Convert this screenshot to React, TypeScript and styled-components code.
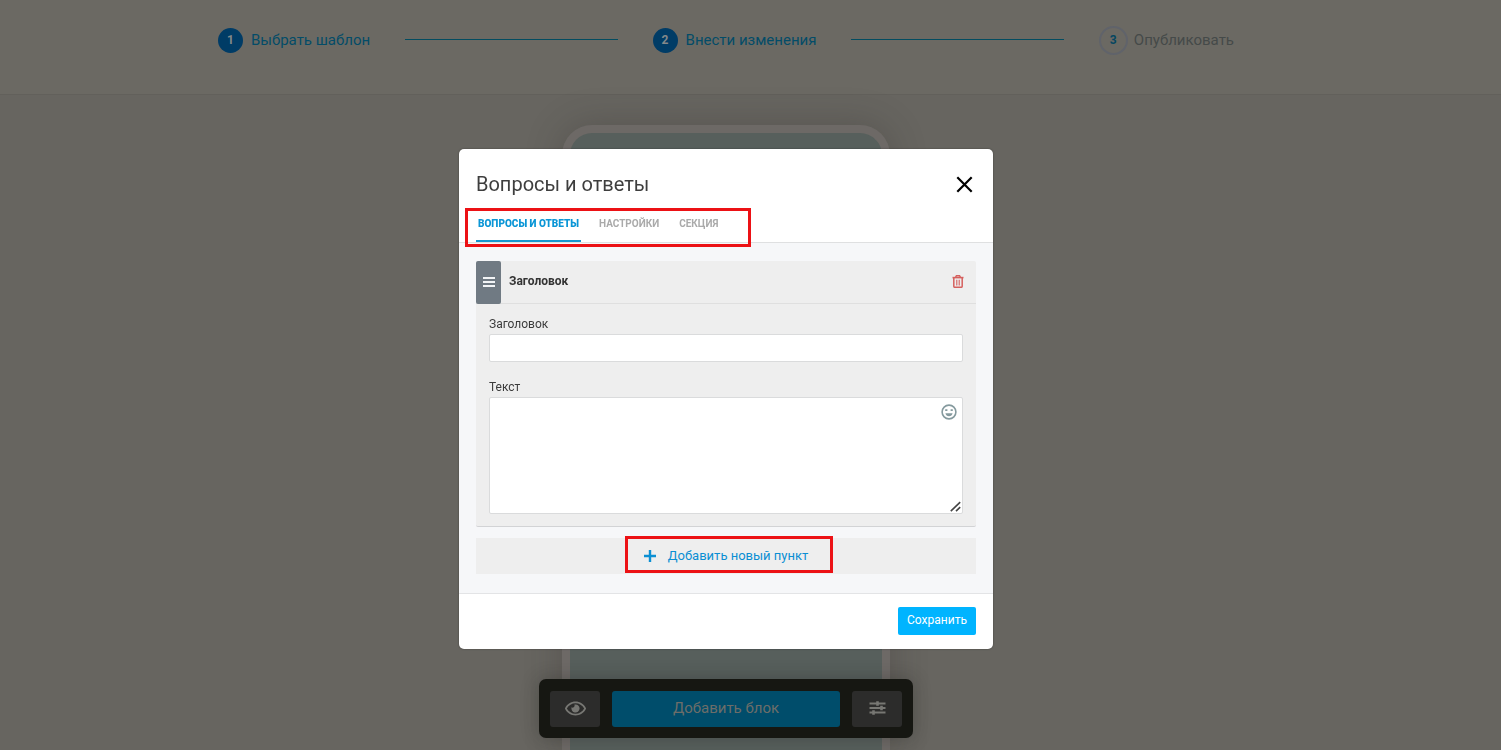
import React from "react";
import styled, { createGlobalStyle } from "styled-components";
import { FaRegEye } from "react-icons/fa";

const GlobalStyle = createGlobalStyle`
  *, *::before, *::after { box-sizing: border-box; }
  body {
    margin: 0;
    background: #676560;
    font-family: Roboto, "Liberation Sans", sans-serif;
    color: #333;
  }
  button, input, textarea { font: inherit; }
  button { cursor: pointer; }
`;

const Page = styled.div`
  min-height: 100vh;
  display: flex;
  flex-direction: column;
`;

const Header = styled.header`
  padding: 24px 49px 38px 0;
  background: #6b6963;
  border-bottom: 1px solid #62605b;
`;

const Steps = styled.ol`
  display: flex;
  align-items: center;
  gap: 35px;
  max-width: 1016px;
  height: 32px;
  margin: 0 auto;
  padding: 0;
  list-style: none;
`;

const Step = styled.li<{ $pending?: boolean }>`
  display: flex;
  align-items: center;
  gap: ${(p) => (p.$pending ? 6 : 8)}px;
  font-size: 15px;
  line-height: 20px;
  white-space: nowrap;
  color: ${(p) => (p.$pending ? "#454a49" : "#034c68")};
`;

const StepNumber = styled.span<{ $pending?: boolean }>`
  display: grid;
  place-items: center;
  width: ${(p) => (p.$pending ? 29 : 25)}px;
  height: ${(p) => (p.$pending ? 29 : 25)}px;
  border-radius: 50%;
  border: ${(p) => (p.$pending ? "2px solid #60636a" : "0")};
  background: ${(p) => (p.$pending ? "transparent" : "#003c66")};
  color: ${(p) => (p.$pending ? "#044660" : "#84898a")};
  font-size: 12px;
  font-weight: 700;
`;

const StepLine = styled.li`
  flex: 1;
  height: 1px;
  margin-bottom: 2px;
  background: #034c60;
`;

const Stage = styled.main`
  flex: 1;
  display: flex;
  justify-content: center;
  padding: 30px 49px 0 0;
`;

const Phone = styled.div`
  width: 328px;
  border: 8px solid #6d6966;
  border-bottom: 0;
  border-radius: 30px 30px 0 0;
  background: #575f5c;
  box-shadow: 0 0 36px rgba(50, 46, 42, 0.3);
`;

const Toolbar = styled.div`
  display: flex;
  gap: 12px;
  padding: 12px 11px 11px;
  border-radius: 7px;
  background: #161712;
  box-shadow: 0 0 18px rgba(30, 30, 28, 0.3);
`;

const ToolbarDock = styled.div`
  position: fixed;
  inset: auto 49px 12px 0;
  display: flex;
  justify-content: center;
`;

const ToolButton = styled.button<{ $primary?: boolean }>`
  display: grid;
  place-items: center;
  width: ${(p) => (p.$primary ? 228 : 50)}px;
  height: 36px;
  padding: 0 0 2px;
  border: 0;
  border-radius: 3px;
  background: ${(p) => (p.$primary ? "#004d6b" : "#2c2c2b")};
  color: #6d6d69;
  font-size: 15px;
`;

const ModalLayer = styled.div`
  position: fixed;
  inset: 0 49px 0 0;
  display: flex;
  justify-content: center;
  align-items: flex-start;
  padding-top: 149px;
`;

const Modal = styled.section`
  width: 100%;
  max-width: 534px;
  border-radius: 5px;
  background: #fff;
  box-shadow: 0 0 2px rgba(0, 0, 0, 0.4);
`;

const ModalHeader = styled.header`
  display: flex;
  align-items: center;
  justify-content: space-between;
  padding: 21px 20px 7px 17px;
`;

const Title = styled.h1`
  margin: 0;
  font-size: 20px;
  line-height: 28px;
  font-weight: 400;
  color: #3e3e3e;
`;

const IconButton = styled.button`
  display: grid;
  place-items: center;
  padding: 0;
  border: 0;
  background: none;
`;

const Tabs = styled.nav`
  position: relative;
  display: flex;
  gap: 16px;
  padding: 6px 17px 0;
  border-bottom: 1px solid #dfe0e1;
`;

const Tab = styled.button<{ $active?: boolean }>`
  height: 31px;
  padding: 0 2px 4px;
  border: 0;
  border-bottom: 2px solid ${(p) => (p.$active ? "#1597d0" : "transparent")};
  background: none;
  color: ${(p) => (p.$active ? "#0b96d6" : "#aaa")};
  font-size: 10px;
  line-height: 12px;
  font-weight: ${(p) => (p.$active ? 900 : 700)};
  text-transform: uppercase;
`;

const Highlight = styled.span`
  position: absolute;
  border: 3px solid #ec1115;
  pointer-events: none;
`;

const TabsHighlight = styled(Highlight)`
  inset: 3px auto -5px 6px;
  width: 286px;
`;

const AddHighlight = styled(Highlight)`
  inset: -2px 143px 1px 149px;
`;

const ModalBody = styled.div`
  padding: 18px 17px 19px;
  background: #f6f7f9;
`;

const Card = styled.article`
  border-radius: 2px;
  border-bottom: 1px solid #d2d3d5;
  background: #eee;
`;

const CardHeader = styled.header`
  display: flex;
  align-items: center;
  height: 43px;
  padding: 0 12px 2px 0;
  border-bottom: 1px solid #dfdfdf;
`;

const Handle = styled.button`
  display: grid;
  place-items: center;
  align-self: flex-start;
  width: 25px;
  height: 43px;
  padding: 0 0 2px;
  border: 0;
  border-radius: 2px;
  background: #707a83;
`;

const CardTitle = styled.h2`
  flex: 1;
  margin: 0;
  padding-left: 8px;
  font-size: 12px;
  line-height: 16px;
  font-weight: 700;
  color: #333;
`;

const Fields = styled.div`
  display: grid;
  gap: 17px;
  padding: 12px 13px;
`;

const Field = styled.div`
  position: relative;
  display: grid;
  gap: 2px;
`;

const Label = styled.label`
  font-size: 12px;
  line-height: 16px;
  color: #3b3b3b;
`;

const Input = styled.input`
  width: 100%;
  height: 28px;
  padding: 0 8px;
  border: 1px solid #dadbdc;
  border-radius: 2px;
  background: #fff;
  outline: 0;
`;

const TextArea = styled.textarea`
  display: block;
  width: 100%;
  height: 117px;
  padding: 8px 32px 8px 8px;
  border: 1px solid #dadbdc;
  border-radius: 2px;
  background: #fff;
  resize: none;
  outline: 0;
`;

const EmojiButton = styled(IconButton)`
  position: absolute;
  top: 25px;
  right: 6px;
`;

const Grip = styled.svg`
  position: absolute;
  right: 2px;
  bottom: 2px;
`;

const AddRow = styled.div`
  position: relative;
  margin-top: 11px;
`;

const AddButton = styled.button`
  display: flex;
  align-items: center;
  justify-content: center;
  gap: 12px;
  width: 100%;
  height: 36px;
  padding: 0;
  border: 0;
  background: #eee;
  color: #0b8fd3;
  font-size: 13px;
  line-height: 16px;
`;

const ModalFooter = styled.footer`
  display: flex;
  justify-content: flex-end;
  padding: 13px 17px 14px;
  border-top: 1px solid #e3e4e6;
`;

const SaveButton = styled.button`
  width: 78px;
  height: 28px;
  padding: 0 0 2px;
  border: 0;
  border-radius: 2px;
  background: #00b4ff;
  color: #fff;
  font-size: 12px;
  line-height: 16px;
`;

const CloseIcon = () => (
  <svg width="17" height="17" viewBox="0 0 17 17" stroke="#000" strokeWidth="2.2" aria-hidden="true">
    <path d="M1.3 1.3l14.4 14.4M15.7 1.3L1.3 15.7" />
  </svg>
);

const BarsIcon = () => (
  <svg width="12" height="10" viewBox="0 0 12 10" fill="#f2f4f6" aria-hidden="true">
    <path d="M0 0h12v2H0zM0 4h12v2H0zM0 8h12v2H0z" />
  </svg>
);

const TrashIcon = () => (
  <svg width="12" height="13" viewBox="0 0 12 13" fill="none" stroke="#d5605e" aria-hidden="true">
    <path d="M.5 2.6h11" strokeWidth="1.6" />
    <path d="M3.6 2.4L4.4 .8h3.2l.8 1.6" strokeWidth="1.4" />
    <path d="M1.8 3v8.2q0 1.1 1.1 1.1h6.2q1.1 0 1.1-1.1V3" strokeWidth="1.5" />
    <path d="M4.8 4.8v5.6M7.2 4.8v5.6" strokeWidth="1.1" />
  </svg>
);

const SmileIcon = () => (
  <svg width="16" height="16" viewBox="0 0 16 16" aria-hidden="true">
    <circle cx="8" cy="8" r="6.9" fill="none" stroke="#859a9e" strokeWidth="1.6" />
    <path d="M4.2 5.2h2.2v1.9H4.2zM9.6 5.2h2.2v1.9H9.6zM4.4 9.3h7.2q-.7 2.9-3.6 2.9t-3.6-2.9z" fill="#859a9e" />
  </svg>
);

const PlusIcon = () => (
  <svg width="12" height="12" viewBox="0 0 12 12" stroke="#0b8fd3" strokeWidth="2.4" aria-hidden="true">
    <path d="M6 0v12M0 6h12" />
  </svg>
);

const SlidersIcon = () => (
  <svg width="17" height="14" viewBox="0 0 17 14" fill="none" stroke="#777773" aria-hidden="true">
    <path d="M.5 2.5h16M.5 7h16M.5 11.5h16" strokeWidth="2" />
    <path d="M8.5 .3v4.4M12.5 4.8v4.4M4.5 9.3v4.4" strokeWidth="2.6" />
  </svg>
);

export default function App() {
  return (
    <>
      <GlobalStyle />
      <Page>
        <Header>
          <Steps>
            <Step><StepNumber>1</StepNumber>Выбрать шаблон</Step>
            <StepLine aria-hidden="true" />
            <Step><StepNumber>2</StepNumber>Внести изменения</Step>
            <StepLine aria-hidden="true" />
            <Step $pending><StepNumber $pending>3</StepNumber>Опубликовать</Step>
          </Steps>
        </Header>
        <Stage><Phone /></Stage>
      </Page>

      <ToolbarDock>
        <Toolbar>
          <ToolButton aria-label="Просмотр"><FaRegEye size={21} color="#777773" /></ToolButton>
          <ToolButton $primary>Добавить блок</ToolButton>
          <ToolButton aria-label="Параметры"><SlidersIcon /></ToolButton>
        </Toolbar>
      </ToolbarDock>

      <ModalLayer>
        <Modal role="dialog" aria-labelledby="dialog-title">
          <ModalHeader>
            <Title id="dialog-title">Вопросы и ответы</Title>
            <IconButton aria-label="Закрыть"><CloseIcon /></IconButton>
          </ModalHeader>
          <Tabs>
            <Tab $active>Вопросы и ответы</Tab>
            <Tab>Настройки</Tab>
            <Tab>Секция</Tab>
            <TabsHighlight />
          </Tabs>
          <ModalBody>
            <Card>
              <CardHeader>
                <Handle aria-label="Переместить"><BarsIcon /></Handle>
                <CardTitle>Заголовок</CardTitle>
                <IconButton aria-label="Удалить"><TrashIcon /></IconButton>
              </CardHeader>
              <Fields>
                <Field>
                  <Label htmlFor="item-title">Заголовок</Label>
                  <Input id="item-title" type="text" />
                </Field>
                <Field>
                  <Label htmlFor="item-text">Текст</Label>
                  <TextArea id="item-text" />
                  <EmojiButton aria-label="Эмодзи"><SmileIcon /></EmojiButton>
                  <Grip width="11" height="11" viewBox="0 0 11 11" stroke="#444" strokeWidth="1.6" aria-hidden="true">
                    <path d="M.8 10.2l9.4-9M6 10.2l4.2-4" />
                  </Grip>
                </Field>
              </Fields>
            </Card>
            <AddRow>
              <AddButton><PlusIcon />Добавить новый пункт</AddButton>
              <AddHighlight />
            </AddRow>
          </ModalBody>
          <ModalFooter><SaveButton>Сохранить</SaveButton></ModalFooter>
        </Modal>
      </ModalLayer>
    </>
  );
}
